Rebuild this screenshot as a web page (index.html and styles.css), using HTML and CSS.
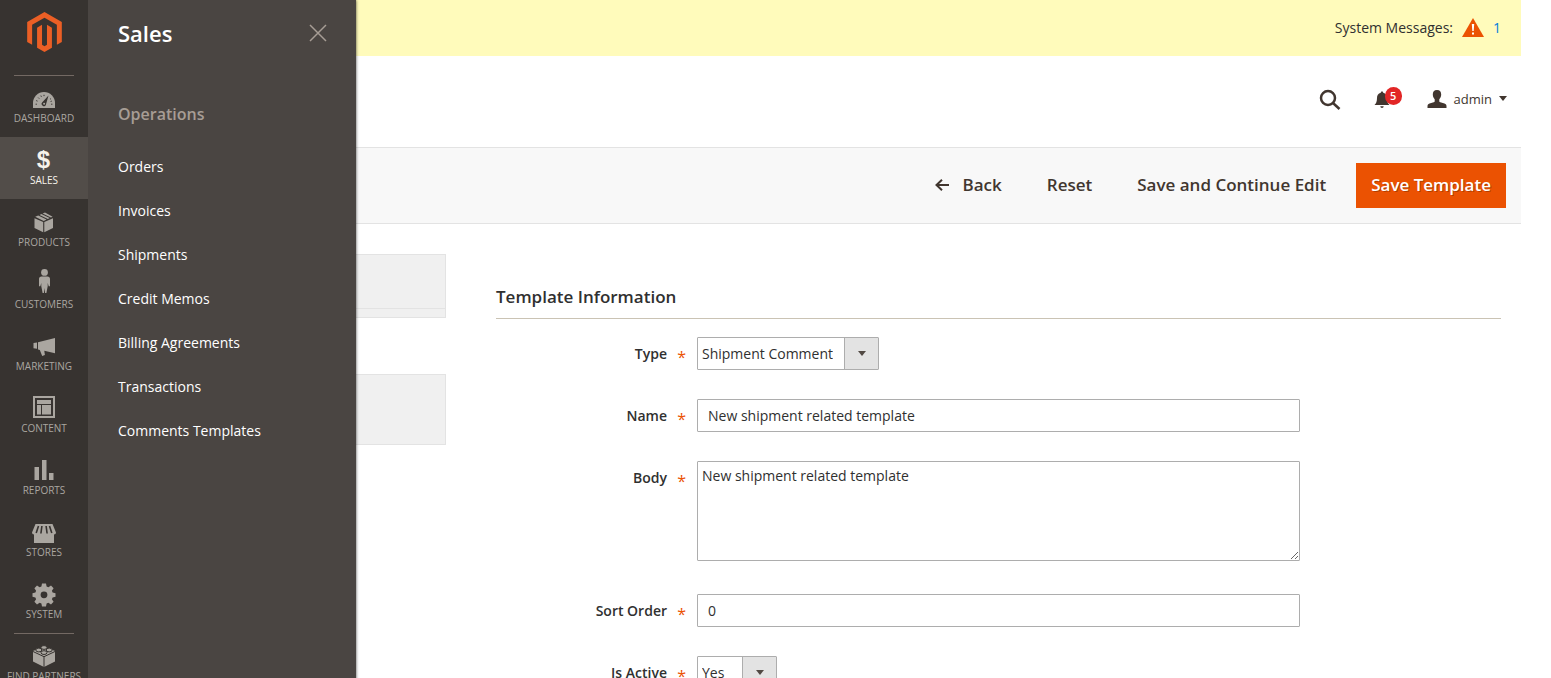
FILE: index.html
```html
<!DOCTYPE html>
<html lang="en">
<head>
<meta charset="utf-8">
<title>Comments Templates / Sales</title>
<meta name="viewport" content="width=device-width, initial-scale=1">
<link rel="stylesheet" href="styles.css">
</head>
<body>
<div class="app">
  <aside class="sidebar">
    <a class="logo" href="#" aria-label="Magento Admin">
      <svg viewBox="1.609 0 20.782 24" width="35" height="40"><path d="M12 24l-4.455-2.572v-12l2.97-1.715v12.001l1.485.902 1.485-.902V7.713l2.971 1.715v12L12 24zM22.391 6v12l-2.969 1.714V7.713L12 3.43 4.574 7.713v12.001L1.609 18V6L12 0l10.391 6z"/></svg>
    </a>
    <nav class="menu" aria-label="Main">
      <a class="menu-item ruled" href="#">
        <svg class="menu-icon" viewBox="0 0 24 24"><path d="M1 21v-5a11 11 0 0 1 22 0v5z"/><g class="cut"><path d="M16.5 8.5l-2.6 9.2a2.2 2.2 0 1 1-3.6-2.4z"/><path class="dots" d="M3.6 17.2h1.3M4.2 13.6l1.3.5M6.2 10.6l1 1M8.9 8.6l.5 1.2M12 7.8v1.3M18.9 11.6l-.9.8M19.8 14.1l-1.2.4M20.4 17.2h-1.3"/></g><circle cx="12.1" cy="16.8" r="1"/></svg>
        <span>Dashboard</span>
      </a>
      <a class="menu-item active" href="#" aria-current="page">
        <svg class="menu-icon" viewBox="0 0 24 24"><text class="dollar" x="11.5" y="19" text-anchor="middle">$</text></svg>
        <span>Sales</span>
      </a>
      <a class="menu-item" href="#">
        <svg class="menu-icon" viewBox="0 0 24 24"><path d="M2.5 7.2l8.7 3.8v10.2l-8.7-4.3zM21 7.2l-8.7 3.8v10.2l8.7-4.3zM3.2 5.800l3-1.300 8.400 4-2.900 1.400zM7.500 3.900l1.800-.8 8.400 4-1.800.8zM10.600 2.500l2.400-1.100 7.600 4.300-1.700.9z"/></svg>
        <span>Products</span>
      </a>
      <a class="menu-item" href="#">
        <svg class="menu-icon" viewBox="0 0 24 24"><circle cx="12.5" cy="-.6" r="3.4"/><path d="M9.5 3.500h6c1.600 0 2.500 1 2.500 2.600v7.200h-1.300l-1-3.300v3.200L14.400 20h-1.300l-.6-5-.6 5h-1.300l-1.300-6.800V10l-1 3.300H7V6.100c0-1.600.9-2.600 2.500-2.600z"/></svg>
        <span>Customers</span>
      </a>
      <a class="menu-item" href="#">
        <svg class="menu-icon" viewBox="0 0 24 24"><path d="M23 3v15.300l-10.700-2.600 .6 4.300-2.700 1-2.400-5.900L6 14.500V7.200zM1.500 8l3.500-.5v6.300l-3.500-.6z"/></svg>
        <span>Marketing</span>
      </a>
      <a class="menu-item" href="#">
        <svg class="menu-icon" viewBox="0 0 24 24"><path fill-rule="evenodd" d="M1-1h22v22H1zM3 1v18h18V1z"/><path d="M5 3h14v4H5zM5 8h4v9.500H5zM10 8h9v9.500h-9z"/></svg>
        <span>Content</span>
      </a>
      <a class="menu-item" href="#">
        <svg class="menu-icon" viewBox="0 0 24 24"><path d="M2.500 8h4.500v13H2.500zM10 1h4.500v20H10zM17 14h4.500v7H17z"/></svg>
        <span>Reports</span>
      </a>
      <a class="menu-item" href="#">
        <svg class="menu-icon" viewBox="0 0 24 24"><path d="M3.500 3h17L24 11.500a2 2 0 0 1-2 2V22H2v-8.500a2 2 0 0 1-2-2z"/><path class="stripes" d="M6.500 5L4.200 12M9.900 5l-1 7.500M14.100 5l1 7.500M17.500 5l2.300 7"/></svg>
        <span>Stores</span>
      </a>
      <a class="menu-item" href="#">
        <svg class="menu-icon" viewBox="0 0 24 24"><path fill-rule="evenodd" d="M10 .5h4l.6 3 1.800.8 2.600-1.700 2.600 2.600-1.700 2.600.7 1.800 2.900.6v3.600l-2.900.6-.7 1.800 1.700 2.600-2.600 2.600-2.600-1.700-1.800.8-.6 3h-4l-.6-3-1.800-.8L5 21.400l-2.600-2.600 1.700-2.600-.7-1.800-2.900-.6v-3.600l2.900-.6.7-1.800-1.700-2.600L5 2.600l2.600 1.700 1.800-.8zM12 8.400a3.400 3.400 0 1 0 0 6.800 3.400 3.400 0 0 0 0-6.800z"/></svg>
        <span>System</span>
      </a>
      <a class="menu-item ruled" href="#">
        <svg class="menu-icon" viewBox="0 0 24 24"><path d="M1 6l11-4.500L23 6v10.500L12 22 1 16.500z"/><path class="seam" d="M1 6.500l11 5.200 11-5.200M12 11.700V22"/><g class="studs"><ellipse cx="12" cy="2.500" rx="3" ry="1.900"/><ellipse cx="6.800" cy="5" rx="3" ry="1.900"/><ellipse cx="17.200" cy="5" rx="3" ry="1.900"/><ellipse cx="12" cy="7.600" rx="3" ry="1.900"/></g></svg>
        <span>Find Partners</span>
      </a>
    </nav>
    <section class="flyout" aria-label="Sales menu">
      <header class="flyout-head">
        <h2>Sales</h2>
        <button class="close" type="button" aria-label="Close"><svg viewBox="0 0 18 18" width="18" height="18"><path d="M1 1l16 16M17 1L1 17"/></svg></button>
      </header>
      <h3>Operations</h3>
      <ul>
        <li><a href="#">Orders</a></li>
        <li><a href="#">Invoices</a></li>
        <li><a href="#">Shipments</a></li>
        <li><a href="#">Credit Memos</a></li>
        <li><a href="#">Billing Agreements</a></li>
        <li><a href="#">Transactions</a></li>
        <li><a href="#">Comments Templates</a></li>
      </ul>
    </section>
  </aside>

  <div class="page">
    <div class="messages">
      <span>System Messages:</span>
      <svg viewBox="0 0 22 20" width="22" height="20"><path class="warn" d="M11 0l11 19H0z"/><path class="mark" d="M9.800 6h2.400l-.5 7h-1.400zM10 14.500h2v2h-2z"/></svg>
      <a href="#">1</a>
    </div>

    <header class="topbar">
      <button class="icon-button search" type="button" aria-label="Search"><svg viewBox="0 0 22 22" width="22" height="22"><circle cx="9" cy="9" r="7"/><path d="M14 14l6.500 6"/></svg></button>
      <button class="icon-button bell" type="button" aria-label="Notifications"><svg viewBox="0 0 16 18" width="16" height="18"><path d="M8 .5c.8 0 1.200.5 1.200 1.200C12 2.400 13 4.600 13 7c0 3.500.8 5.200 2.500 7H.5C2.200 12.200 3 10.500 3 7c0-2.400 1-4.600 3.800-5.300C6.800 1 7.200.5 8 .5zM6.300 15.200h3.400a1.700 1.700 0 0 1-3.400 0z"/></svg><span class="badge">5</span></button>
      <button class="account" type="button"><svg viewBox="0 0 20 18" width="20" height="18"><path d="M10 0c3 0 4.300 1.900 4.200 4.600-.1 2-.8 3.600-1.900 4.700v1.900c0 .6.400.9 1 1.100l4.200 1.300c1.400.5 2 1.400 2 2.700V18H.5v-1.700c0-1.300.6-2.200 2-2.700l4.200-1.300c.6-.2 1-.5 1-1.100V9.300C6.600 8.200 5.900 6.600 5.800 4.600 5.700 1.900 7 0 10 0z"/></svg><span>admin</span><i class="caret"></i></button>
    </header>

    <div class="actions">
      <button class="action" type="button"><svg viewBox="0 0 14 12" width="14" height="12"><path d="M14 6H1.500M7 .8L1.500 6 7 11.200"/></svg>Back</button>
      <button class="action" type="button">Reset</button>
      <button class="action" type="button">Save and Continue Edit</button>
      <button class="action primary" type="submit" form="template-form">Save Template</button>
    </div>

    <div class="columns">
      <div class="side">
        <div class="panel scope"></div>
        <div class="panel tabs"></div>
      </div>
      <form class="form" id="template-form">
        <h1>Template Information</h1>
        <div class="field">
          <label for="type">Type</label>
          <div class="select"><select id="type"><option>Shipment Comment</option></select><i class="caret"></i></div>
        </div>
        <div class="field">
          <label for="name">Name</label>
          <input id="name" type="text" value="New shipment related template">
        </div>
        <div class="field">
          <label for="body">Body</label>
          <textarea id="body">New shipment related template</textarea>
        </div>
        <div class="field">
          <label for="sort">Sort Order</label>
          <input id="sort" type="text" value="0">
        </div>
        <div class="field">
          <label for="active">Is Active</label>
          <div class="select"><select id="active"><option>Yes</option></select><i class="caret"></i></div>
        </div>
      </form>
    </div>
  </div>
</div>
</body>
</html>
```

FILE: styles.css
```css
* {
  box-sizing: border-box;
}

body {
  margin: 0;
  background: #fff;
  color: #303030;
  font: 14px/20px "Open Sans", "Noto Sans", sans-serif;
}

button,
input,
select,
textarea {
  font: inherit;
  color: inherit;
}

button {
  margin: 0;
  padding: 0;
  border: 0;
  background: none;
  cursor: pointer;
}

a {
  text-decoration: none;
}

.app {
  display: flex;
  min-height: 100vh;
}

/* Sidebar */
.sidebar {
  position: relative;
  z-index: 2;
  flex: none;
  width: 88px;
  background: #373330;
}

.logo {
  display: flex;
  justify-content: center;
  padding: 12px 0 23px;
}

.logo svg {
  fill: #eb5f25;
}

.menu {
  display: flex;
  flex-direction: column;
}

.menu-item {
  display: flex;
  flex-direction: column;
  align-items: center;
  position: relative;
  padding: 12px 0;
  color: #aaa6a0;
  font-size: 10px;
  line-height: 14px;
  text-transform: uppercase;
  white-space: nowrap;
}

.menu-item.active {
  background: #524d49;
  color: #f7f3eb;
}

.ruled::before {
  content: "";
  position: absolute;
  top: 0;
  left: 14px;
  right: 14px;
  border-top: 1px solid #736963;
}

.menu-icon {
  width: 24px;
  height: 24px;
  overflow: visible;
  fill: currentColor;
}

.cut {
  fill: #373330;
}

.dots,
.stripes,
.seam {
  fill: none;
  stroke: #373330;
}

.stripes {
  stroke-width: 1.6;
}

.studs {
  fill: #aaa6a0;
  stroke: #373330;
}

.dollar {
  font: bold 24px "Liberation Sans", sans-serif;
}

/* Flyout submenu */
.flyout {
  position: absolute;
  top: 0;
  bottom: 0;
  left: 100%;
  width: 268px;
  padding: 19px 29px 20px 30px;
  background: #4a4542;
  box-shadow: 0 0 3px rgba(0, 0, 0, 0.7);
  clip-path: inset(0 -8px 0 0);
}

.flyout-head {
  display: flex;
  align-items: center;
  justify-content: space-between;
}

.flyout h2 {
  margin: 0;
  color: #fff;
  font-size: 22px;
  line-height: 28px;
  font-weight: 600;
}

.close {
  display: flex;
}

.close svg {
  stroke: #a79d95;
  stroke-width: 1.5;
}

.flyout h3 {
  margin: 57px 0 21px;
  color: #a79d95;
  font-size: 16px;
  line-height: 20px;
  font-weight: 600;
}

.flyout ul {
  margin: 0;
  padding: 0;
  list-style: none;
}

.flyout li a {
  display: block;
  padding: 12px 0;
  color: #fff;
}

/* Page */
.page {
  flex: 1;
  min-width: 0;
  margin-right: 30px;
}

.messages {
  display: flex;
  align-items: center;
  justify-content: flex-end;
  gap: 9px;
  padding: 18px 20px;
  background: #fffbbb;
}

.messages a {
  color: #007bdb;
}

.warn {
  fill: #eb5202;
}

.mark {
  fill: #fff;
}

.topbar {
  display: flex;
  align-items: center;
  justify-content: flex-end;
  height: 91px;
  padding: 0 14px 6px 30px;
  color: #41362f;
}

.topbar svg {
  fill: currentColor;
}

.icon-button {
  display: flex;
  position: relative;
  margin: 2px 33px 0 0;
}

.topbar .search svg {
  fill: none;
  stroke: currentColor;
  stroke-width: 2.5;
}

.bell {
  margin-right: 37px;
}

.badge {
  position: absolute;
  top: -4px;
  left: 11px;
  width: 17px;
  border-radius: 9px;
  background: #e22626;
  color: #fff;
  font-size: 11px;
  line-height: 18px;
  font-weight: 600;
  text-align: center;
}

.account {
  display: flex;
  align-items: center;
  gap: 7px;
  font-size: 13px;
}

.caret {
  width: 8px;
  border: 4px solid transparent;
  border-top: 5px solid currentColor;
  border-bottom: 0;
}

.actions {
  display: flex;
  align-items: center;
  justify-content: flex-end;
  padding: 15px;
  border: solid #e3e3e3;
  border-width: 1px 0;
  background: #f8f8f8;
}

.action {
  display: flex;
  align-items: center;
  gap: 14px;
  margin-right: 15px;
  padding: 11px 15px 12px;
  color: #41362f;
  font-size: 17px;
  line-height: 22px;
  font-weight: 600;
}

.action svg {
  fill: none;
  stroke: currentColor;
  stroke-width: 2;
}

.primary {
  margin-right: 0;
  background: #eb5202;
  color: #fff;
  text-shadow: 1px 1px 0 rgba(0, 0, 0, 0.25);
}

.columns {
  display: flex;
  gap: 50px;
  padding: 30px 20px 30px 30px;
}

.side {
  flex: none;
  width: 328px;
}

.panel {
  border: 1px solid #e3e3e3;
  background: #f0f0f0;
}

.scope {
  height: 64px;
  margin-bottom: 56px;
}

.scope::before {
  content: "";
  display: block;
  height: 53px;
  border-bottom: 1px solid #e3e3e3;
}

.tabs {
  height: 71px;
}

/* Form */
.form {
  display: flex;
  flex: 1;
  flex-direction: column;
  gap: 29px;
  min-width: 0;
  padding-top: 32px;
}

.form h1 {
  margin: 0 0 -11px;
  padding-bottom: 10px;
  border-bottom: 1px solid #cac3b4;
  font-size: 17px;
  line-height: 22px;
  font-weight: 600;
}

.field {
  display: grid;
  grid-template-columns: 20% 60%;
  align-items: start;
}

.field label {
  position: relative;
  padding: 7px 30px 6px 0;
  font-weight: 600;
  text-align: right;
}

.field label::after {
  content: "*";
  position: absolute;
  top: 10px;
  right: 11px;
  color: #eb5202;
  font-size: 16px;
  font-weight: 400;
}

.field input,
.field textarea,
.field select {
  display: block;
  border: 1px solid #adadad;
  border-radius: 1px;
  background: #fff;
}

.field input {
  width: 100%;
  height: 33px;
  padding: 0 10px;
}

.field textarea {
  width: 100%;
  height: 100px;
  margin-bottom: 4px;
  padding: 4px;
  resize: both;
}

.select {
  position: relative;
  justify-self: start;
}

.field select {
  min-width: 80px;
  height: 33px;
  padding: 0 45px 0 4px;
  appearance: none;
  background: linear-gradient(#adadad, #adadad) right 33px top / 1px 100% no-repeat,
    linear-gradient(#e3e3e3, #e3e3e3) right / 33px 100% no-repeat #fff;
}

.select .caret {
  position: absolute;
  top: 14px;
  right: 13px;
  color: #514943;
  pointer-events: none;
}
```
